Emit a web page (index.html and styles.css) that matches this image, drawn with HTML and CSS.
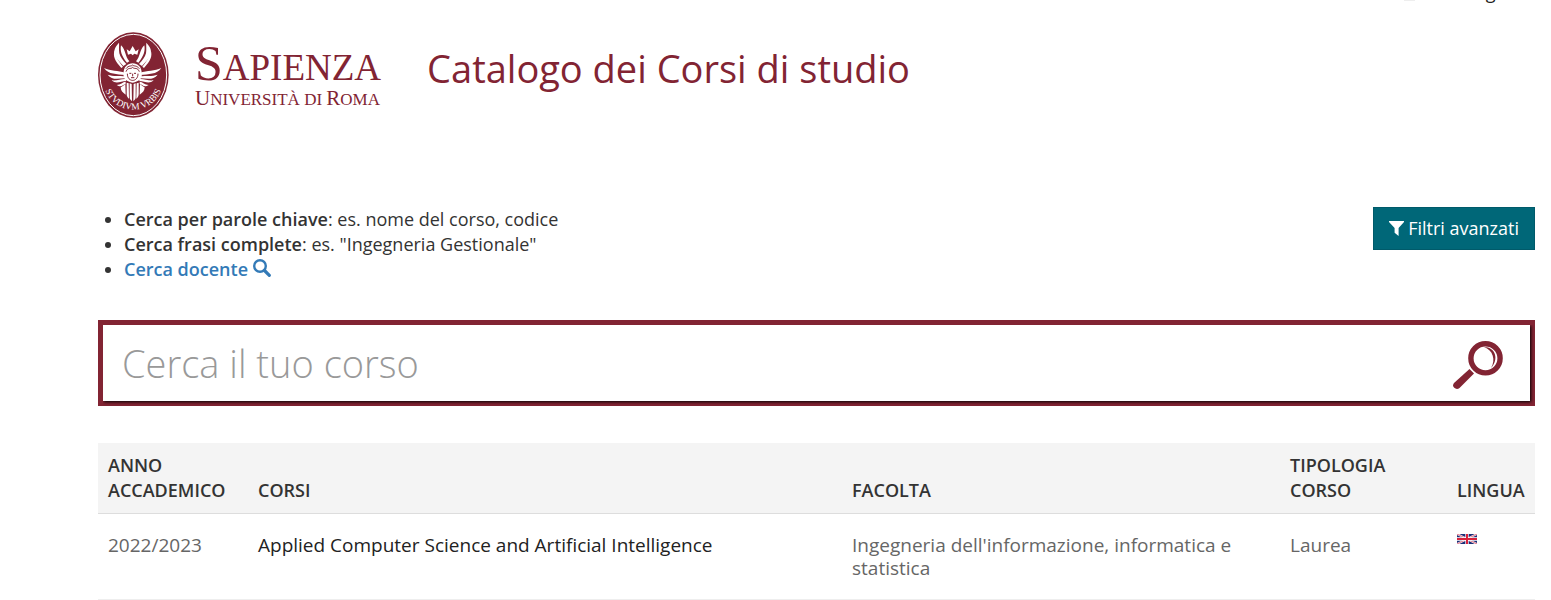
FILE: index.html
```html
<!DOCTYPE html>
<html lang="it">
<head>
  <meta charset="UTF-8">
  <meta name="viewport" content="width=device-width, initial-scale=1.0">
  <title>Catalogo dei Corsi di studio</title>
  <link rel="stylesheet" href="styles.css">
</head>
<body>

<div class="topbar">
  <span class="mark"></span>
  <a href="#">Login</a>
</div>

<header class="header">
  <a class="logo" href="#">
    <svg class="seal" viewBox="24 20 213 258" aria-hidden="true">
      <defs>
        <path id="motto" d="M42 180 C62 277 198 277 218 180"/>
        <g id="wing" fill="#fff">
          <path d="M87 52 C70 70 68 84 84 104 L100 122 L109 116 C98 104 91 96 88 84 C86 72 88 62 87 52z"/>
          <path d="M93 60 C90 76 94 92 111 112 L118 108 C104 92 108 74 93 60z"/>
          <path d="M74 74 C68 92 74 106 94 128 L99 124 C82 104 77 92 74 74z"/>
          <path d="M42 128 C62 137 84 136 106 142 L106 149 C80 146 56 148 42 128z"/>
          <path d="M53 148 C70 154 88 150 106 153 L106 159 C86 159 66 166 53 148z"/>
          <path d="M65 165 C82 167 92 160 108 161 L108 167 C92 168 78 178 65 165z"/>
          <path d="M80 179 C92 178 98 170 107 169 L107 175 C98 178 94 188 80 179z"/>
          <path d="M92 186 C98 184 102 178 106 176 L107 208 C98 202 92 196 92 186z"/>
          <path d="M110 172 L116 174 L117 220 C112 216 110 212 110 206z"/>
          <path d="M119 174 L125 176 L126 228 C122 224 119 222 119 216z"/>
        </g>
      </defs>
      <ellipse cx="130" cy="149" rx="106" ry="128" fill="#822433"/>
      <ellipse cx="130" cy="149" rx="100" ry="122" fill="none" stroke="#fff" stroke-width="3"/>
      <use href="#wing"/>
      <use href="#wing" transform="translate(256 0) scale(-1 1)"/>
      <path fill="#fff" d="M110 72 l9 6 9 -16 9 16 9 -6 -4 16 -9 -3 -5 5 -5 -5 -9 3z"/>
      <path fill="#fff" d="M101 145 C98 103 158 103 155 145 C158 160 145 168 128 172 C111 168 98 160 101 145z"/>
      <path fill="none" stroke="#822433" stroke-width="3" d="M108 139 C114 124 122 133 128 126 C134 133 142 124 148 139 M108 130 C116 119 124 124 128 119 C132 124 140 119 148 130"/>
      <path fill="none" stroke="#822433" stroke-width="3" d="M112 145 C112 172 144 172 144 145 M118 144 h6 M132 144 h6 M128 145 v8 M123 157 h10"/>
      <text class="motto"><textPath href="#motto" startOffset="50%" text-anchor="middle">STVDIVM VRBIS</textPath></text>
    </svg>
    <span class="wordmark">
      <span class="name"><span class="cap">S</span>APIENZA</span>
      <span class="subname"><span class="cap">U</span>NIVERSITÀ DI <span class="cap">R</span>OMA</span>
    </span>
  </a>
  <h1>Catalogo dei Corsi di studio</h1>
</header>

<main>
  <div class="intro">
    <ul class="hints">
      <li><strong>Cerca per parole chiave</strong>: es. nome del corso, codice</li>
      <li><strong>Cerca frasi complete</strong>: es. "Ingegneria Gestionale"</li>
      <li><a href="#"><strong>Cerca docente</strong>
        <svg class="lens" viewBox="0 0 18 18" aria-hidden="true">
          <circle cx="7" cy="7" r="5.8" fill="none" stroke="currentColor" stroke-width="2.4"/>
          <path d="M11.5 11.5 L16.3 16.3" stroke="currentColor" stroke-width="3.2" stroke-linecap="round"/>
        </svg></a></li>
    </ul>
    <button class="filters" type="button">
      <svg class="funnel" viewBox="0 0 15 15" aria-hidden="true">
        <path fill="currentColor" d="M0 0 H15 V1 L9.6 7 V15 L5.6 11.8 V7 L0 1z"/>
      </svg>
      Filtri avanzati
    </button>
  </div>

  <form class="search">
    <div class="field">
      <input type="text" id="corso" placeholder="Cerca il tuo corso" aria-label="Cerca il tuo corso">
      <button type="submit" aria-label="Cerca">
        <svg viewBox="0 0 50 49" aria-hidden="true">
          <circle cx="32.5" cy="17.3" r="14.6" fill="none" stroke="#822433" stroke-width="5.400"/>
          <path fill="#822433" d="M31 6 C43 6 46 19 38 27 C43 19 40 9 31 6z"/>
          <path fill="#822433" d="M16.500 28 L21 32.500 L6.500 47 C3 50 -2 45.500 1 42z"/>
        </svg>
      </button>
    </div>
  </form>

  <table class="courses">
    <thead>
      <tr>
        <th class="year">ANNO ACCADEMICO</th>
        <th class="course">CORSI</th>
        <th class="faculty">FACOLTA</th>
        <th class="type">TIPOLOGIA CORSO</th>
        <th class="lang">LINGUA</th>
      </tr>
    </thead>
    <tbody>
      <tr>
        <td>2022/2023</td>
        <td><a href="#">Applied Computer Science and Artificial Intelligence</a></td>
        <td>Ingegneria dell'informazione, informatica e statistica</td>
        <td>Laurea</td>
        <td>
          <svg class="flag" viewBox="0 0 60 30" role="img" aria-label="Inglese">
            <path fill="#1c2f78" d="M0 0h60v30H0z"/>
            <path stroke="#fff" stroke-width="6" d="M0 0 L60 30 M60 0 L0 30"/>
            <path stroke="#d8203a" stroke-width="2" d="M0 0 L60 30 M60 0 L0 30"/>
            <path stroke="#fff" stroke-width="10" d="M30 0 V30 M0 15 H60"/>
            <path stroke="#d8203a" stroke-width="6" d="M30 0 V30 M0 15 H60"/>
          </svg>
        </td>
      </tr>
    </tbody>
  </table>
</main>

</body>
</html>
```
FILE: styles.css
```css
* {
    box-sizing: border-box;
}

body {
    margin: 0;
    padding: 0 16px 0 98px;
    font-family: "Open Sans", sans-serif;
    font-size: 18px;
    line-height: 25px;
    color: #333;
    background-color: #fff;
}

a {
    color: #337ab7;
    text-decoration: none;
}

/* the bar is scrolled almost out of the window */
.topbar {
    display: flex;
    justify-content: flex-end;
    align-items: center;
    gap: 50px;
    height: 25px;
    margin-top: -20px;
    padding-right: 24px;
}

.topbar a {
    color: #222;
}

.mark {
    width: 11px;
    height: 17px;
    background-color: #eee;
}

.header {
    display: flex;
    align-items: flex-start;
    gap: 46px;
    padding-top: 27px;
    color: #822433;
}

.header h1 {
    margin: 11px 0 0;
    font-size: 38px;
    font-weight: 400;
    line-height: 50px;
}

.logo {
    display: flex;
    gap: 26px;
    color: #822433;
}

.seal {
    display: block;
    width: 71px;
    height: 86px;
}

.motto {
    font-family: "Liberation Serif", serif;
    font-size: 28px;
    fill: #fff;
}

.wordmark {
    font-family: "Liberation Serif", serif;
    padding-top: 10px;
}

.name,
.subname {
    display: block;
    white-space: nowrap;
}

.name {
    font-size: 37px;
    line-height: 42px;
}

.name .cap {
    font-size: 50px;
}

.subname {
    font-size: 17px;
    line-height: 18px;
}

.subname .cap {
    font-size: 21px;
}

.intro {
    display: flex;
    justify-content: space-between;
    align-items: flex-start;
    margin-top: 89px;
}

.hints {
    margin: 0;
    padding-left: 26px;
}

.hints strong {
    font-weight: 600;
}

.lens {
    width: 18px;
    height: 18px;
    vertical-align: -1px;
}

.filters {
    display: flex;
    align-items: center;
    gap: 4px;
    padding: 8px 15px;
    border: 1px solid #005a6a;
    background-color: #006778;
    color: #fff;
    font-family: inherit;
    font-size: 18px;
    line-height: 25px;
}

.funnel {
    width: 15px;
    height: 15px;
}

.search {
    margin-top: 38px;
    padding: 5px;
    background-color: #822433;
}

.field {
    display: flex;
    background-color: #fff;
    box-shadow: 1px 1px 3px #000;
    clip-path: inset(0 -5px -5px 0);
}

.search input {
    flex: 1;
    min-width: 0;
    height: 76px;
    padding: 0 19px;
    border: 0;
    outline: 0;
    font-family: inherit;
    font-size: 38px;
    font-weight: 300;
    color: #333;
}

.search input::placeholder {
    color: #999;
}

.search button {
    padding: 16px 27px 11px;
    border: 0;
    background: none;
}

.search svg {
    display: block;
    width: 50px;
    height: 49px;
}

.courses {
    width: 100%;
    margin-top: 37px;
    border-collapse: collapse;
    table-layout: fixed;
}

.courses th {
    padding: 10px;
    text-align: left;
    vertical-align: bottom;
    background-color: #f4f4f4;
    border-bottom: 1px solid #ddd;
    font-weight: 600;
}

.courses td {
    padding: 20px 10px 19px;
    vertical-align: top;
    font-size: 19px;
    line-height: 23px;
    color: #666;
    border-bottom: 1px solid #eee;
}

.courses td a {
    color: #222;
}

.year {
    width: 150px;
}

.faculty {
    width: 438px;
}

.type {
    width: 167px;
}

.lang {
    width: 88px;
}

.flag {
    display: block;
    width: 20px;
    height: 10px;
}
```
